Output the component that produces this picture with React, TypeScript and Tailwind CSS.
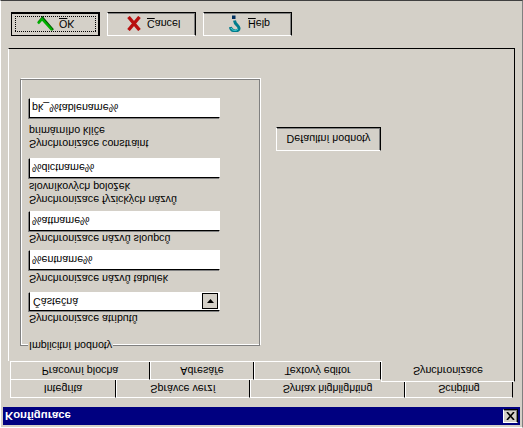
import React from 'react';

const ui = "font-['Liberation_Sans',Arial,sans-serif] text-[10.7px] leading-[13px] text-black";

// classic raised win9x box, drawn with plain borders
const raised = 'border border-t-white border-l-white border-r-black border-b-black shadow-[inset_-1px_-1px_0_#808080]';

const CheckIcon = () => (
  <svg width="17" height="16" viewBox="0 0 17 16" className="shrink-0">
    <path d="M1.5 9.5 L5.5 14 L16 2" fill="none" stroke="#005000" strokeWidth="2.5" />
    <path d="M1 8.5 L5 13 L15 2" fill="none" stroke="#00b000" strokeWidth="2.5" />
  </svg>
);

const CrossIcon = () => (
  <svg width="14" height="15" viewBox="0 0 14 15" className="shrink-0">
    <path d="M1.5 1 L12.5 14 M12.5 1 L1.5 14" fill="none" stroke="#b80f0f" strokeWidth="3.4" />
  </svg>
);

const HelpIcon = () => (
  <svg width="12" height="17" viewBox="0 0 12 17" className="shrink-0">
    <path d="M1.5 5 C2 0 10.5 0 10 4 C9.5 7 6 7 5.5 11.5" fill="none" stroke="#007c8c" strokeWidth="3" />
    <path d="M2 4 C3 1 8 1 9 3" fill="none" stroke="#50e0e0" strokeWidth="1" />
    <rect x="3" y="13" width="3.5" height="3.5" fill="#003060" />
  </svg>
);

const ToolButton: React.FC<{ hot: string; rest: string; icon: React.ReactNode; className: string; gap: string }> = ({ hot, rest, icon, className, gap }) => (
  <button className={`w-[89px] h-[24px] bg-[#d4d0c8] flex items-center justify-center ${className}`}>
    <span className={`flex items-center w-full h-full ${gap}`}>
      {icon}
      <span><u>{hot}</u>{rest}</span>
    </span>
  </button>
);

const Field: React.FC<{ label: string[]; value: string; combo?: boolean; className?: string; inputGap: string; height: string }> = ({ label, value, combo, className, inputGap, height }) => (
  <div className={`flex flex-col w-[191px] ${className ?? ''}`}>
    {label.map(line => <span key={line} className="h-[13px] whitespace-nowrap">{line}</span>)}
    <div className={`${height} ${inputGap} bg-white flex items-center border border-t-black border-l-black border-r-white border-b-white shadow-[-1px_-1px_0_#808080] ${combo ? 'pl-[3px]' : 'pl-[2px]'}`}>
      <span className="flex-1">{value}</span>
      {combo && (
        <span className={`w-[16px] h-[16px] mr-[1px] bg-[#d4d0c8] flex items-center justify-center border border-black`}>
          <svg width="7" height="4" viewBox="0 0 7 4"><path d="M0 0 H7 L3.5 4 Z" fill="#000" /></svg>
        </span>
      )}
    </div>
  </div>
);

const Tab: React.FC<{ label: string; width: string }> = ({ label, width }) => (
  <div className={`${width} h-[18px] flex items-center justify-center bg-[#d4d0c8] border-t border-l border-r border-t-white border-l-white border-r-black whitespace-nowrap`}>
    {label}
  </div>
);

export default function App() {
  return (
    <div className={`${ui} w-[523px] h-[428px] bg-[#d4d0c8] -scale-y-100 flex flex-col overflow-hidden pt-[2px] border border-t-white border-l-white border-r-[#808080] border-b-[#404040]`}>
      {/* title bar */}
      <div className="mx-[2px] h-[18px] bg-[#000080] flex items-center justify-between pl-[2px] pr-[2px] shrink-0">
        <span className="text-white font-bold text-[11.3px]">Konfigurace</span>
        <span className={`w-[15px] h-[14px] bg-[#d4d0c8] flex items-center justify-center ${raised}`}>
          <svg width="9" height="8" viewBox="0 0 9 8"><path d="M1 0 L8 8 M8 0 L1 8" stroke="#000" strokeWidth="1.6" /></svg>
        </span>
      </div>

      {/* tabs */}
      <div className="mt-[9px] pl-[9px] flex shrink-0">
        <Tab label="Integrita" width="w-[106px]" />
        <Tab label="Správce verzí" width="w-[134px]" />
        <Tab label="Syntax highlighting" width="w-[155px]" />
        <Tab label="Scripting" width="w-[108px]" />
      </div>
      <div className="pl-[9px] flex items-end shrink-0 h-[19px]">
        <div className="flex border-b border-b-white">
          <Tab label="Pracovní plocha" width="w-[140px]" />
          <Tab label="Adresáře" width="w-[104px]" />
          <Tab label="Textový editor" width="w-[127px]" />
        </div>
        <div className="w-[134px] h-[21px] pt-[1px] flex items-center justify-center bg-[#d4d0c8] whitespace-nowrap border-t border-l border-r border-t-white border-l-white border-r-black">Synchronizace</div>
      </div>

      {/* panel */}
      <div className="ml-[7px] w-[507px] h-[313px] flex items-start gap-[16px] pl-[11px] pt-[15px] border-l border-r border-b border-l-white border-r-black border-b-black shrink-0">
        <div className="relative w-[240px] h-[267px] flex flex-col border border-[#808080] pl-[8px] pt-[20px] shadow-[inset_1px_1px_0_white,1px_1px_0_white]">
          <span className="absolute left-[7px] -top-[7px] bg-[#d4d0c8] px-[1px]">Implicitní hodnoty</span>
          <Field label={['Synchronizace atributů']} value="Částečná" combo inputGap="mt-[1px]" height="h-[19px]" />
          <Field label={['Synchronizace názvů tabulek']} value="%entname%" className="mt-[7px]" inputGap="mt-[2px]" height="h-[20px]" />
          <Field label={['Synchronizace názvů sloupců']} value="%attname%" className="mt-[5px]" inputGap="mt-[1px]" height="h-[20px]" />
          <Field label={['Synchronizace fyzických názvů', 'slovníkových položek']} value="%dictname%" className="mt-[5px]" inputGap="mt-[2px]" height="h-[20px]" />
          <Field label={['Synchronizace constraint', 'primárního klíče']} value="pk_%tablename%" className="mt-[8px]" inputGap="mt-[6px]" height="h-[20px]" />
        </div>
        <button className={`mt-[195px] w-[105px] h-[24px] bg-[#d4d0c8] ${raised}`}>Defaultní hodnoty</button>
      </div>

      {/* buttons */}
      <div className="mt-[12px] pl-[10px] flex gap-[7px] shrink-0">
        <ToolButton hot="O" rest="K" icon={<CheckIcon />} className="border border-black shadow-[inset_-1px_-1px_0_black] outline-1 outline-dotted outline-black -outline-offset-[5px] pl-[25px]" gap="gap-[5px]" />
        <ToolButton hot="C" rest="ancel" icon={<CrossIcon />} className={`${raised} pl-[19px]`} gap="gap-[6px]" />
        <ToolButton hot="H" rest="elp" icon={<HelpIcon />} className={`${raised} pl-[25px]`} gap="gap-[7px]" />
      </div>
    </div>
  );
}
